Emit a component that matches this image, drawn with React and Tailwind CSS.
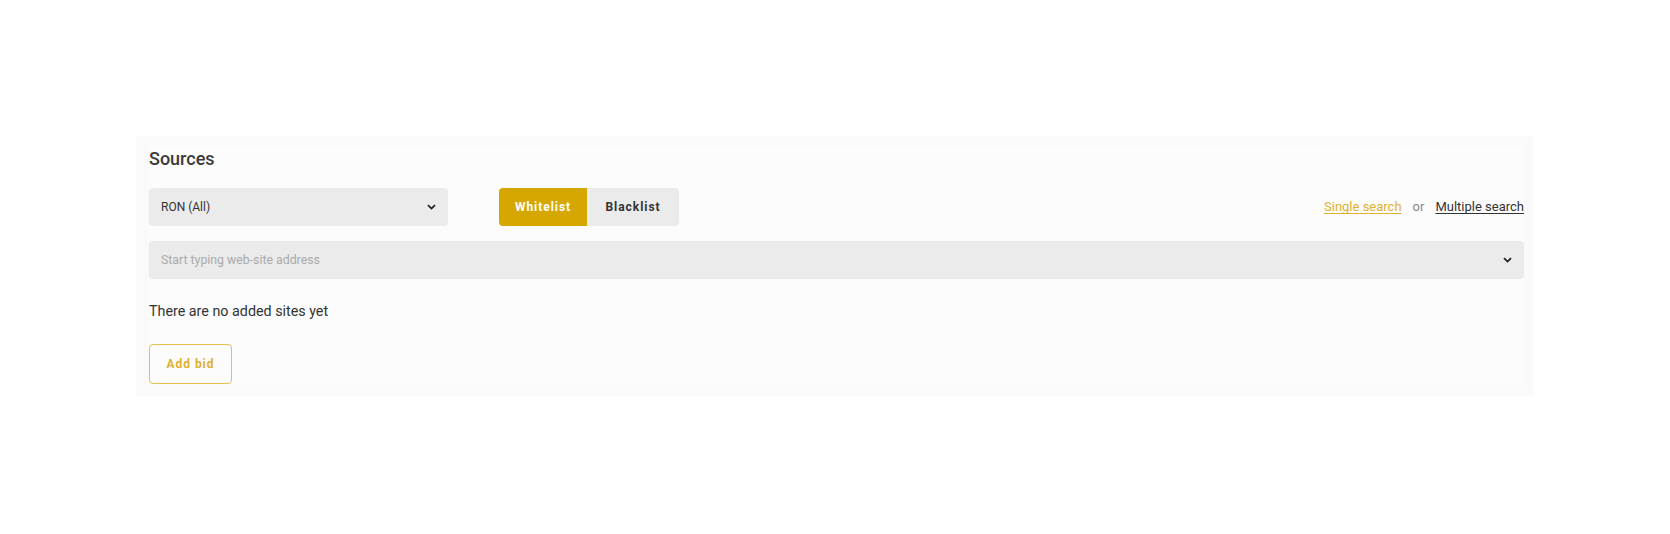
const Chevron = () => (
  <svg width="9" height="6" viewBox="0 0 9 6" className="shrink-0">
    <path d="M1 1.2 L4.5 4.6 L8 1.2" fill="none" stroke="#222" strokeWidth="1.8" />
  </svg>
);

export default function App() {
  return (
    <div className="min-h-screen bg-white pt-[136px] pl-[136px] pr-[137px] font-['Roboto',sans-serif]">
      <div className="bg-[#fafafa] pl-[13px] pr-[9px] pt-[11px] pb-[12px]">
        <div className="bg-[#fcfcfc]">
          <h2 className="text-[18px] leading-6 font-medium text-[#3a3a3a]">Sources</h2>

          <div className="mt-[17px] flex items-center h-[38px]">
            <button
              type="button"
              className="w-[299px] h-[38px] rounded bg-[#ebebeb] flex items-center justify-between pl-[12px] pr-[12px] text-[12px] text-[#333]"
            >
              <span>RON (All)</span>
              <Chevron />
            </button>

            <div className="ml-[51px] flex h-[38px]">
              <button
                type="button"
                className="w-[88px] h-[38px] rounded-l bg-[#d6a700] text-white text-[12px] font-bold tracking-[0.08em]"
              >
                Whitelist
              </button>
              <button
                type="button"
                className="w-[92px] h-[38px] rounded-r bg-[#ebebeb] text-[#333] text-[12px] font-bold tracking-[0.08em]"
              >
                Blacklist
              </button>
            </div>

            <div className="ml-auto flex items-center gap-[11px] text-[13px]">
              <a className="text-[#e0b030] underline underline-offset-2 cursor-pointer">Single search</a>
              <span className="text-[#888]">or</span>
              <a className="text-[#333] underline underline-offset-2 cursor-pointer">Multiple search</a>
            </div>
          </div>

          <div className="mt-[15px] h-[38px] rounded bg-[#ebebeb] flex items-center justify-between pl-[12px] pr-[12px]">
            <span className="text-[12.3px] text-[#aaa]">Start typing web-site address</span>
            <Chevron />
          </div>

          <p className="mt-[22px] text-[14.3px] leading-5 text-[#333]">There are no added sites yet</p>

          <button
            type="button"
            className="mt-[23px] w-[83px] h-[40px] rounded border border-[#e6c04a] text-[#e0b030] text-[12px] font-bold tracking-[0.08em]"
          >
            Add bid
          </button>
        </div>
      </div>
    </div>
  );
}
